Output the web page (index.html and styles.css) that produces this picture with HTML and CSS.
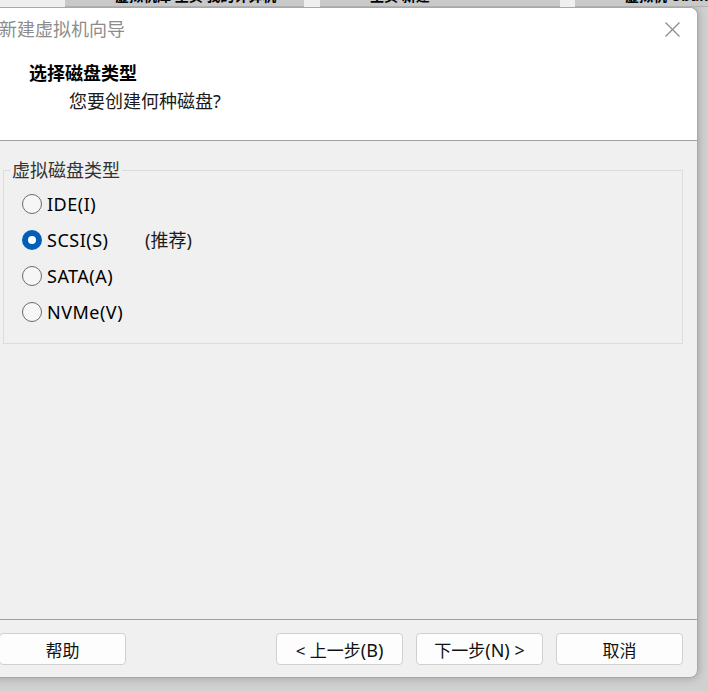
FILE: index.html
```html
<!DOCTYPE html>
<html lang="zh-CN">
<head>
    <meta charset="UTF-8">
    <title>新建虚拟机向导</title>
    <link rel="stylesheet" href="styles.css">
</head>
<body>
<div class="tabs">
    <div class="tab gap-a"></div>
    <div class="tab on w1"><span>虚拟机库 主页 我的计算机</span></div>
    <div class="tab gap-b"></div>
    <div class="tab on w2"><span>主页 新建</span></div>
    <div class="tab gap-c"></div>
    <div class="tab on w3"><span>虚拟机 Ubuntu</span></div>
</div>

<div class="window">
    <div class="header">
        <div class="title-row">
            <span class="title">新建虚拟机向导</span>
            <svg class="close" width="15" height="15" viewBox="0 0 15 15">
                <path d="M0.5 0.5 L14.5 14.5 M14.5 0.5 L0.5 14.5" stroke="#8a8a8a" stroke-width="1.2" fill="none"/>
            </svg>
        </div>
        <div class="heading">选择磁盘类型</div>
        <div class="subheading">您要创建何种磁盘?</div>
    </div>

    <div class="main">
        <fieldset class="group">
            <legend>虚拟磁盘类型</legend>
            <div class="options">
                <div class="option">
                    <span class="radio"></span>
                    <span class="label">IDE(I)</span>
                </div>
                <div class="option">
                    <span class="radio checked"></span>
                    <span class="label">SCSI(S)</span>
                    <span class="note">(推荐)</span>
                </div>
                <div class="option">
                    <span class="radio"></span>
                    <span class="label">SATA(A)</span>
                </div>
                <div class="option">
                    <span class="radio"></span>
                    <span class="label">NVMe(V)</span>
                </div>
            </div>
        </fieldset>
    </div>

    <div class="footer">
        <button class="btn help">帮助</button>
        <div class="nav">
            <button class="btn">&lt; 上一步<b>(B)</b></button>
            <button class="btn">下一步<b>(N) &gt;</b></button>
            <button class="btn">取消</button>
        </div>
    </div>
</div>
</body>
</html>
```

FILE: styles.css
```css
* {
    margin: 0;
    padding: 0;
    box-sizing: border-box;
}
body {
    width: 708px;
    height: 691px;
    overflow: hidden;
    background: #d0d0d0;
    font-family: "Noto Sans", "Noto Sans CJK SC", sans-serif;
    font-size: 18px;
    color: #000;
}

/* 后面窗口露出来的标签 */
.tabs {
    display: flex;
    height: 7px;
}
.tab {
    height: 7px;
    overflow: hidden;
    background: #efefef;
}
.tab.on {
    background: #c9c9c9;
    border-bottom: 1px solid #b0b0b0;
}
.tab span {
    display: block;
    margin-top: -12px;
    padding-left: 50px;
    font-size: 14px;
    line-height: 16px;
    font-weight: bold;
    white-space: nowrap;
}
.gap-a { width: 65px; }
.w1 { width: 239px; }
.gap-b { width: 16px; }
.w2 { width: 240px; }
.gap-c { width: 15px; }
.w3 { flex: 1; }

/* 对话框 */
.window {
    display: flex;
    flex-direction: column;
    width: 710px;
    height: 671px;
    margin-left: -12px;
    background: #f0f0f0;
    border: 1px solid #a8a8a8;
    border-radius: 0 8px 8px 0;
    box-shadow: 0 0 8px rgba(0, 0, 0, 0.25);
    overflow: hidden;
}
.header {
    background: #fff;
    border-bottom: 1px solid #a0a0a0;
    padding: 9px 0 27px;
}
.title-row {
    display: flex;
    justify-content: space-between;
    align-items: center;
    height: 24px;
    padding: 0 17px 0 10px;
}
.title {
    color: #8c8c8c;
    line-height: 24px;
}
.heading {
    margin: 20px 0 0 40px;
    font-weight: bold;
    line-height: 24px;
}
.subheading {
    margin: 4px 0 0 80px;
    line-height: 24px;
    color: #1a1a1a;
}

.main {
    flex: 1;
}
.group {
    margin: 17px 14px 0 14px;
    border: 1px solid #dcdcdc;
    padding: 0 0 13px;
}
.group legend {
    margin-left: 6px;
    padding: 0 2px;
    line-height: 24px;
    color: #333;
}
.options {
    padding: 4px 0 0 18px;
}
.option {
    display: flex;
    align-items: center;
    height: 36px;
}
.radio {
    width: 20px;
    height: 20px;
    border: 1px solid #6a6a6a;
    border-radius: 50%;
    background: #f6f6f6;
}
.radio.checked {
    border: 6px solid #005fb8;
    background: #fff;
}
.label {
    width: 98px;
    margin-left: 5px;
    font-size: 18px;
    letter-spacing: 0.5px;
    line-height: 24px;
}
.note {
    line-height: 24px;
    color: #1a1a1a;
}

.footer {
    display: flex;
    align-items: flex-start;
    border-top: 1px solid #a0a0a0;
    padding: 13px 14px 12px 10px;
}
.nav {
    display: flex;
    gap: 13px;
    margin-left: auto;
}
.btn {
    width: 127px;
    height: 32px;
    background: #fdfdfd;
    border: 1px solid #d0d0d0;
    border-radius: 4px;
    font-family: "Noto Sans", "Noto Sans CJK SC", sans-serif;
    font-size: 17px;
    color: #111;
}
.btn b {
    font-weight: normal;
    font-size: 18px;
}
```
